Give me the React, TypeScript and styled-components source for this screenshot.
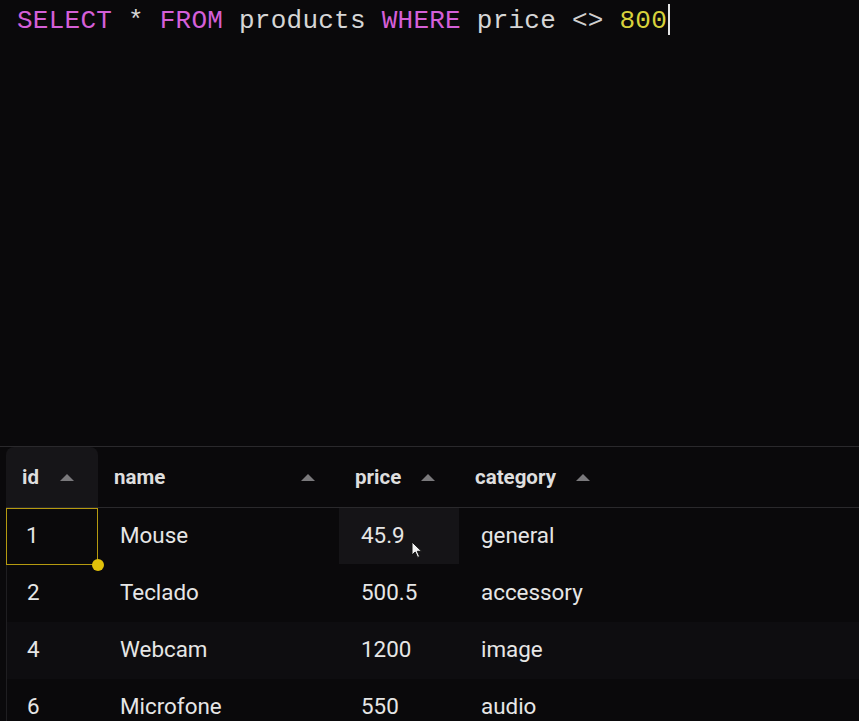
import styled, { createGlobalStyle } from "styled-components";

const GlobalStyle = createGlobalStyle`
  html, body {
    margin: 0;
    padding: 0;
    background: #0a090b;
  }
  * {
    box-sizing: border-box;
  }
`;

const Page = styled.div`
  height: 100vh;
  display: flex;
  flex-direction: column;
  background: #0a090b;
  overflow: hidden;
`;

const Editor = styled.div`
  height: 446px;
  flex-shrink: 0;
  padding: 4px 0 0 17px;
  font-family: "Liberation Mono", "DejaVu Sans Mono", monospace;
  font-size: 26px;
  letter-spacing: 0.25px;
  line-height: 32px;
  white-space: pre;
  color: #d6d6d6;
`;

const Token = styled.span<{ $kind?: "kw" | "num" | "op" }>`
  color: ${(p) =>
    p.$kind === "kw" ? "#d45fd8" : p.$kind === "num" ? "#d8d23c" : p.$kind === "op" ? "#cfcfcf" : "#d6d6d6"};
`;

const Caret = styled.span`
  display: inline-block;
  width: 2px;
  height: 31px;
  background: #e4e4e4;
  vertical-align: -7px;
  margin-left: 1px;
`;

const Grid = styled.div`
  flex: 1;
  border-top: 1px solid #2a292c;
  font-family: Roboto, "Noto Sans", sans-serif;
`;

const HeaderRow = styled.div`
  display: grid;
  grid-template-columns: 92px 241px 120px 155px 1fr;
  height: 61px;
  margin-left: 6px;
  border-bottom: 1px solid #2a292c;
`;

const HeaderCell = styled.div<{ $active?: boolean }>`
  display: flex;
  align-items: center;
  justify-content: space-between;
  padding: 0 24px 1px 16px;
  font-size: 20.5px;
  font-weight: 700;
  color: #dedede;
  background: ${(p) => (p.$active ? "#161518" : "transparent")};
  border-radius: 8px 8px 0 0;
`;

const SortArrow = styled.span`
  width: 0;
  height: 0;
  border-left: 7px solid transparent;
  border-right: 7px solid transparent;
  border-bottom: 7px solid #7a797c;
  margin-top: 1px;
`;

const Body = styled.div`
  margin-left: 6px;
  border-left: 1px solid #1f1e21;
`;

const Row = styled.div<{ $striped?: boolean }>`
  display: grid;
  grid-template-columns: 91px 241px 120px 155px 1fr;
  height: 57px;
  background: ${(p) => (p.$striped ? "#0e0d10" : "transparent")};
`;

const Cell = styled.div<{ $selected?: boolean; $hover?: boolean; $first?: boolean }>`
  position: relative;
  display: flex;
  align-items: center;
  padding-left: ${(p) => (p.$selected ? "19px" : p.$first ? "20px" : "22px")};
  padding-bottom: 3px;
  font-size: 22.4px;
  color: #e6e6e6;
  background: ${(p) => (p.$hover ? "#151417" : "transparent")};
  border: ${(p) => (p.$selected ? "1px solid #b59a10" : "none")};
  margin-left: ${(p) => (p.$selected ? "-1px" : "0")};
  height: ${(p) => (p.$hover ? "56px" : "auto")};
`;

const Handle = styled.span`
  position: absolute;
  right: -7px;
  bottom: -7px;
  width: 12px;
  height: 12px;
  border-radius: 50%;
  background: #e1c10a;
`;

const Pointer = styled.svg`
  position: absolute;
  left: 72px;
  top: 33px;
`;

const rows = [
  { id: 1, name: "Mouse", price: "45.9", category: "general" },
  { id: 2, name: "Teclado", price: "500.5", category: "accessory" },
  { id: 4, name: "Webcam", price: "1200", category: "image" },
  { id: 6, name: "Microfone", price: "550", category: "audio" },
];

const columns = ["id", "name", "price", "category"];

export default function App() {
  return (
    <Page>
      <GlobalStyle />
      <Editor>
        <Token $kind="kw">SELECT</Token> <Token>*</Token> <Token $kind="kw">FROM</Token>{" "}
        <Token>products</Token> <Token $kind="kw">WHERE</Token> <Token>price</Token>{" "}
        <Token $kind="op">{"<>"}</Token> <Token $kind="num">800</Token>
        <Caret />
      </Editor>
      <Grid>
        <HeaderRow>
          {columns.map((c, i) => (
            <HeaderCell key={c} $active={i === 0}>
              <span>{c}</span>
              <SortArrow />
            </HeaderCell>
          ))}
          <div />
        </HeaderRow>
        <Body>
          {rows.map((r, i) => (
            <Row key={r.id} $striped={i === 2}>
              <Cell $selected={i === 0} $first>
                {r.id}
                {i === 0 && <Handle />}
              </Cell>
              <Cell>{r.name}</Cell>
              <Cell $hover={i === 0}>
                {r.price}
                {i === 0 && (
                  <Pointer width="12" height="18" viewBox="0 0 12 18">
                    <path
                      d="M1 1 L1 14 L4.2 11 L6.6 16.4 L8.6 15.5 L6.3 10.3 L10.6 10.3 Z"
                      fill="#f2f2f2"
                      stroke="#111"
                      strokeWidth="1"
                      strokeLinejoin="round"
                    />
                  </Pointer>
                )}
              </Cell>
              <Cell>{r.category}</Cell>
              <div />
            </Row>
          ))}
        </Body>
      </Grid>
    </Page>
  );
}
